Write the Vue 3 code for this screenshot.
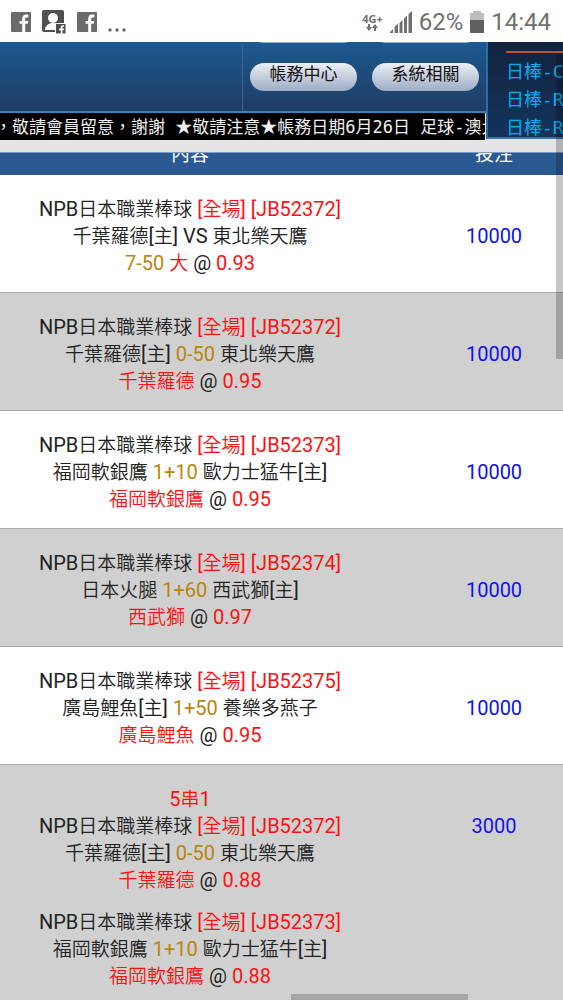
<template>
  <div class="screen">
    <div class="status-bar">
      <div class="status-left">
        <svg viewBox="0 0 20 20" class="fb-icon">
          <rect width="20" height="20" rx="1" fill="#6b6b6b" />
          <path d="M11.200 20v-8.200H8.600V9h2.600V6.900C11.200 4 12.800 2.600 15.200 2.600c1 0 1.900.1 2.100.1v2.700h-1.500c-1.200 0-1.600.6-1.600 1.500V9h3l-.4 2.800h-2.600V20z" fill="#fff" />
        </svg>
        <svg viewBox="0 0 24 24" class="contact-icon">
          <rect width="22" height="22" rx="2" fill="#4f4f4f" />
          <circle cx="11" cy="8" r="5" fill="#fff" />
          <path d="M3 20c0-4 3-6 6-7h4c2 .6 3.500 1.500 4.500 3L14 20z" fill="#fff" />
          <rect x="13.500" y="13.500" width="10.500" height="10.500" fill="#4f4f4f" stroke="#fff" stroke-width="1" />
          <path d="M18.700 24v-3.800h-1.500v-1.700h1.500v-1c0-1.500.9-2.300 2.200-2.300h1.100v1.600h-.8c-.6 0-.8.3-.8.8v.9h1.600l-.2 1.700h-1.400V24z" fill="#fff" />
        </svg>
        <svg viewBox="0 0 20 20" class="fb-icon">
          <rect width="20" height="20" rx="1" fill="#6b6b6b" />
          <path d="M11.200 20v-8.200H8.600V9h2.600V6.900C11.200 4 12.800 2.600 15.200 2.600c1 0 1.900.1 2.100.1v2.700h-1.500c-1.200 0-1.600.6-1.600 1.500V9h3l-.4 2.800h-2.600V20z" fill="#fff" />
        </svg>
        <svg viewBox="0 0 20 20" class="more-icon">
          <circle cx="2" cy="18" r="1.700" fill="#6b6b6b" />
          <circle cx="9" cy="18" r="1.700" fill="#6b6b6b" />
          <circle cx="16" cy="18" r="1.700" fill="#6b6b6b" />
        </svg>
      </div>
      <div class="status-right">
        <div class="network">
          <span>4G+</span>
          <svg viewBox="0 0 12 7" class="arrows">
            <path d="M2 0h2v3h2L3 7 0 3h2zM8 7h2V4h2L9 0 6 4h2z" fill="#707070" />
          </svg>
        </div>
        <svg viewBox="0 0 22 22" class="signal">
          <path d="M0 22v-1l3-3v4zM4.500 22v-6L8 12.500V22zM9.500 22V12l3-3V22zM14 22V7.500l3-3V22zM18.500 22V3L22 0v22z" fill="#707070" />
        </svg>
        <span class="percent">62%</span>
        <svg viewBox="0 0 14 22" class="battery">
          <path d="M3 0h8v2h3v8H0V2h3z" fill="#bdbdbd" />
          <rect y="9" width="14" height="13" fill="#606060" />
        </svg>
        <span class="clock">14:44</span>
      </div>
    </div>

    <header class="header">
      <div class="header-main">
        <div class="banner">
          <div class="logo-area"></div>
          <nav class="menu">
            <div class="menu-row">
              <span class="pill"></span>
              <span class="pill"></span>
            </div>
            <div class="menu-row">
              <button v-for="m in menus" :key="m" type="button" class="pill">{{ m }}</button>
            </div>
          </nav>
        </div>
        <div class="marquee">
          <div class="marquee-text"><span v-for="(n, i) in notice" :key="i" :class="{ star: n === '★' }">{{ n }}</span></div>
        </div>
      </div>
      <aside class="results">
        <a v-for="(r, i) in results" :key="i" href="#">{{ r }}</a>
      </aside>
    </header>

    <main class="content">
      <table class="bets">
        <thead>
          <tr>
            <th class="col-content"><div class="th-text">內容</div></th>
            <th class="col-stake"><div class="th-text">投注</div></th>
          </tr>
        </thead>
        <tbody>
          <tr v-for="(bet, i) in bets" :key="i">
            <td class="col-content">
              <div v-if="bet.combo" class="line red">
                <span v-for="(r, k) in runs(bet.combo)" :key="k" :class="{ han: r.han }">{{ r.text }}</span>
              </div>
              <div v-for="(leg, j) in bet.legs" :key="j" class="leg">
                <div v-for="(line, n) in legLines(leg)" :key="n" class="line">
                  <template v-for="(part, p) in line" :key="p">
                    <span v-for="(r, k) in runs(part[0])" :key="k" :class="[part[1], { han: r.han }]">{{ r.text }}</span>
                  </template>
                </div>
              </div>
            </td>
            <td class="col-stake">{{ bet.stake }}</td>
          </tr>
        </tbody>
      </table>
    </main>

    <div class="scroll-y"></div>
    <div class="scroll-x"></div>
  </div>
</template>

<script setup>
const menus = ['帳務中心', '系統相關']
const notice = '，敬請會員留意，謝謝 ★敬請注意★帳務日期6月26日 足球-澳大'.split(/(★)/)
const results = ['日棒-C', '日棒-R', '日棒-R']

const bets = [
  {
    stake: 10000,
    legs: [{ id: 'JB52372', a: '千葉羅德[主]', mid: 'VS', b: '東北樂天鷹', handicap: '7-50', pick: '大', odds: '0.93' }]
  },
  {
    stake: 10000,
    legs: [{ id: 'JB52372', a: '千葉羅德[主]', mid: '0-50', b: '東北樂天鷹', pick: '千葉羅德', odds: '0.95' }]
  },
  {
    stake: 10000,
    legs: [{ id: 'JB52373', a: '福岡軟銀鷹', mid: '1+10', b: '歐力士猛牛[主]', pick: '福岡軟銀鷹', odds: '0.95' }]
  },
  {
    stake: 10000,
    legs: [{ id: 'JB52374', a: '日本火腿', mid: '1+60', b: '西武獅[主]', pick: '西武獅', odds: '0.97' }]
  },
  {
    stake: 10000,
    legs: [{ id: 'JB52375', a: '廣島鯉魚[主]', mid: '1+50', b: '養樂多燕子', pick: '廣島鯉魚', odds: '0.95' }]
  },
  {
    stake: 3000,
    combo: '5串1',
    legs: [
      { id: 'JB52372', a: '千葉羅德[主]', mid: '0-50', b: '東北樂天鷹', pick: '千葉羅德', odds: '0.88' },
      { id: 'JB52373', a: '福岡軟銀鷹', mid: '1+10', b: '歐力士猛牛[主]', pick: '福岡軟銀鷹', odds: '0.88' }
    ]
  }
]

// [text, colour class] pairs for the three lines of a bet
const legLines = (leg) => [
  [['NPB日本職業棒球 ', ''], [`[全場] [${leg.id}]`, 'red']],
  [[`${leg.a} `, ''], [leg.mid, leg.mid === 'VS' ? '' : 'gold'], [` ${leg.b}`, '']],
  [[leg.handicap ? `${leg.handicap} ` : '', 'gold'], [leg.pick, 'red'], [' @ ', ''], [leg.odds, 'red']]
]

// Chinese characters are set one size smaller than the latin text
const runs = (text) =>
  (text.match(/[\u4e00-\u9fff]+|[^\u4e00-\u9fff]+/g) || []).map((t) => ({
    text: t,
    han: /[\u4e00-\u9fff]/.test(t)
  }))
</script>

<style>
body {
  margin: 0;
  background: #d0d0d0;
}
</style>

<style scoped>
.screen {
  position: relative;
  display: flex;
  flex-direction: column;
  height: 100vh;
  overflow: hidden;
  background: #e4e4e4;
  font-family: Roboto, 'Noto Sans CJK TC', sans-serif;
}

.status-bar {
  display: flex;
  justify-content: space-between;
  align-items: center;
  flex: none;
  height: 42px;
  padding: 2px 12px 0 11px;
  box-sizing: border-box;
  background: #fff;
  color: #707070;
}

.status-left,
.status-right {
  display: flex;
  align-items: center;
}

.status-left {
  gap: 11px;
}

.status-right {
  gap: 7px;
}

.fb-icon,
.more-icon {
  width: 20px;
  height: 20px;
}

.contact-icon {
  width: 24px;
  height: 24px;
}

.network {
  display: flex;
  flex-direction: column;
  align-items: center;
  font: 700 11px/11px 'Open Sans', sans-serif;
}

.arrows {
  width: 12px;
  height: 7px;
}

.signal {
  width: 22px;
  height: 22px;
}

.battery {
  width: 14px;
  height: 22px;
}

.percent,
.clock {
  font-size: 24px;
  line-height: 28px;
}

.header {
  display: flex;
  flex: none;
  height: 98px;
}

.header-main {
  display: flex;
  flex-direction: column;
  flex: 1;
  min-width: 0;
}

.banner {
  display: flex;
  height: 69px;
  background: linear-gradient(#1c5a91, #1f3c63);
  border-bottom: 2px solid #3f7fb4;
  overflow: hidden;
}

.logo-area {
  width: 50%;
  box-sizing: border-box;
  border-right: 1px solid #3a6690;
}

.menu {
  display: flex;
  flex-direction: column;
  justify-content: flex-end;
  gap: 20px;
  width: 50%;
  box-sizing: border-box;
  padding: 0 7px 20px;
}

.menu-row {
  display: flex;
  flex: none;
  gap: 15px;
}

.pill {
  flex: 1;
  height: 28px;
  padding: 0 0 8px;
  border: 0;
  border-radius: 14px;
  background: linear-gradient(#eceff5, #9dadc5);
  color: #111;
  font-family: 'Noto Sans CJK TC', sans-serif;
  font-size: 17px;
  line-height: 20px;
  box-sizing: border-box;
  white-space: nowrap;
}

.marquee {
  flex: 1;
  overflow: hidden;
  background: #000;
  border-right: 1px solid #dfe6ee;
  color: #f0f0f0;
  font-family: 'DejaVu Sans Mono', 'Noto Sans CJK TC', monospace;
  font-size: 17px;
  line-height: 26px;
  white-space: nowrap;
}

.marquee-text {
  margin-left: -5px;
  white-space: pre;
}

.star {
  font-family: 'Noto Sans CJK TC', sans-serif;
}

.results {
  display: flex;
  flex-direction: column;
  flex: none;
  width: 77px;
  height: 97px;
  box-sizing: border-box;
  padding: 9px 0 0 18px;
  border-left: 2px solid #2f6ca3;
  border-bottom: 2px solid #3a76ad;
  background: linear-gradient(#12233f, #14345c);
  overflow: hidden;
}

.results a {
  flex: none;
  color: #00aeef;
  font-family: 'DejaVu Sans Mono', 'Noto Sans CJK TC', monospace;
  font-size: 18px;
  line-height: 28px;
  text-decoration: none;
  white-space: nowrap;
}

.results a:first-child {
  border-top: 2px solid #b9532d;
  padding-top: 5px;
}

.content {
  flex: 1;
  min-height: 0;
  padding-top: 12px;
  overflow: hidden;
}

.bets {
  width: 100%;
  border-collapse: separate;
  border-spacing: 0;
  table-layout: fixed;
}

.bets th {
  padding: 0;
  background: #2b5a93;
  border-top: 1px solid #7f9cc4;
  color: #fff;
  font-size: 19px;
  font-weight: 400;
}

.th-text {
  height: 22px;
  line-height: 4px;
  overflow: hidden;
}

.col-content {
  width: 67.5%;
  text-align: center;
}

.bets .col-stake {
  padding-left: 45px;
  text-align: center;
}

.bets td {
  padding: 19px 0 17px;
  border-bottom: 1px solid #a9a9a9;
  background: #fff;
  color: #222;
  font-size: 20px;
  line-height: 27px;
  vertical-align: top;
}

.bets tr:nth-child(even) td {
  background: #d0d0d0;
}

.bets tr:last-child td {
  padding-bottom: 28px;
}

.bets td.col-stake {
  padding-top: 48px;
  padding-bottom: 0;
  color: #1010f0;
}

.leg + .leg {
  margin-top: 15px;
}

.line {
  height: 27px;
  white-space: pre;
}

.han {
  font-family: 'Noto Sans CJK TC', sans-serif;
  font-size: 19px;
  font-weight: 350;
}

.bets .red {
  color: #ff1010;
}

.gold {
  color: #b8860b;
}

.scroll-y {
  position: absolute;
  top: 55px;
  right: 0;
  width: 7px;
  height: 304px;
  background: rgba(0, 0, 0, 0.22);
}

.scroll-x {
  position: absolute;
  left: 291px;
  bottom: 0;
  width: 177px;
  height: 6px;
  background: rgba(0, 0, 0, 0.2);
}
</style>
